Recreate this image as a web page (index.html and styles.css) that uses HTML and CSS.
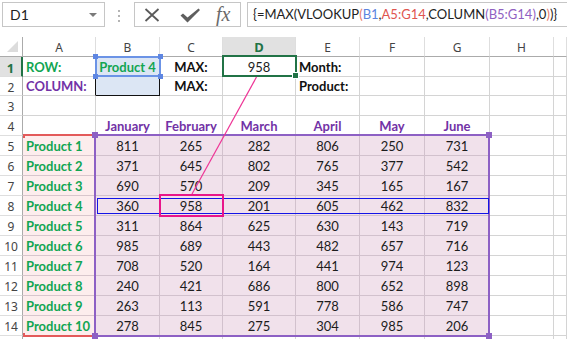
FILE: index.html
```html
<!DOCTYPE html>
<html>
<head>
<meta charset="utf-8">
<link rel="stylesheet" href="styles.css">
</head>
<body>
<div class="fbar">
  <div class="namebox"><span>D1</span><span class="dd"></span></div>
  <div class="dots"><i></i><i></i><i></i></div>
  <div class="fxbox">
    <svg class="ico-x" width="16" height="14" viewBox="0 0 16 14"><path d="M1.5 1 L14.5 13 M14.5 1 L1.5 13" stroke="#5a5a5a" stroke-width="1.8" fill="none"/></svg>
    <svg class="ico-ok" width="21" height="15" viewBox="0 0 21 15"><path d="M0.5 7.5 L3 5.5 L7.5 9.5 L18.5 0.5 L20 2 L7.5 14.5 Z" fill="#5e5e5e"/></svg>
    <span class="fx">fx</span>
  </div>
  <div class="formula">{=MAX(VLOOKUP<span class="p1">(</span><span class="rb">B1</span>,<span class="rr">A5:G14</span>,COLUMN<span class="rp">(</span><span class="rp">B5:G14</span><span class="rp">)</span>,0<span class="p1">)</span>)}</div>
</div>

<div class="sheet">
  <div class="corner"><span class="tri"></span></div>
  <div class="ch">A</div><div class="ch">B</div><div class="ch">C</div><div class="ch ch-sel">D</div><div class="ch">E</div><div class="ch">F</div><div class="ch">G</div><div class="ch">H</div><div class="ch"></div>

  <div class="rh rh-sel">1</div>
  <div class="c lab green">ROW:</div>
  <div class="c ctr lab green sel-fill">Product 4</div>
  <div class="c ctr lab">MAX:</div>
  <div class="c ctr">958</div>
  <div class="c lab">Month:</div>
  <div class="c"></div><div class="c"></div><div class="c"></div><div class="c"></div>

  <div class="rh">2</div>
  <div class="c lab purple bk-r">COLUMN:</div>
  <div class="c sel-fill bk-r bk-b"></div>
  <div class="c ctr lab">MAX:</div>
  <div class="c"></div>
  <div class="c lab">Product:</div>
  <div class="c"></div><div class="c"></div><div class="c"></div><div class="c"></div>

  <div class="rh">3</div>
  <div class="c"></div><div class="c"></div><div class="c"></div><div class="c"></div><div class="c"></div><div class="c"></div><div class="c"></div><div class="c"></div><div class="c"></div>

  <div class="rh">4</div>
  <div class="c"></div>
  <div class="c ctr lab purple">January</div>
  <div class="c ctr lab purple">February</div>
  <div class="c ctr lab purple">March</div>
  <div class="c ctr lab purple">April</div>
  <div class="c ctr lab purple">May</div>
  <div class="c ctr lab purple">June</div>
  <div class="c"></div><div class="c"></div>

  <div class="rh">5</div><div class="c pa lab green">Product 1</div><div class="c pb ctr">811</div><div class="c pb ctr">265</div><div class="c pb ctr">282</div><div class="c pb ctr">806</div><div class="c pb ctr">250</div><div class="c pb ctr">731</div><div class="c"></div><div class="c"></div>
  <div class="rh">6</div><div class="c pa lab green">Product 2</div><div class="c pb ctr">371</div><div class="c pb ctr">645</div><div class="c pb ctr">802</div><div class="c pb ctr">765</div><div class="c pb ctr">377</div><div class="c pb ctr">542</div><div class="c"></div><div class="c"></div>
  <div class="rh">7</div><div class="c pa lab green">Product 3</div><div class="c pb ctr">690</div><div class="c pb ctr">570</div><div class="c pb ctr">209</div><div class="c pb ctr">345</div><div class="c pb ctr">165</div><div class="c pb ctr">167</div><div class="c"></div><div class="c"></div>
  <div class="rh">8</div><div class="c pa lab green">Product 4</div><div class="c pb ctr">360</div><div class="c pb ctr">958</div><div class="c pb ctr">201</div><div class="c pb ctr">605</div><div class="c pb ctr">462</div><div class="c pb ctr">832</div><div class="c"></div><div class="c"></div>
  <div class="rh">9</div><div class="c pa lab green">Product 5</div><div class="c pb ctr">311</div><div class="c pb ctr">864</div><div class="c pb ctr">625</div><div class="c pb ctr">630</div><div class="c pb ctr">143</div><div class="c pb ctr">719</div><div class="c"></div><div class="c"></div>
  <div class="rh">10</div><div class="c pa lab green">Product 6</div><div class="c pb ctr">985</div><div class="c pb ctr">689</div><div class="c pb ctr">443</div><div class="c pb ctr">482</div><div class="c pb ctr">657</div><div class="c pb ctr">716</div><div class="c"></div><div class="c"></div>
  <div class="rh">11</div><div class="c pa lab green">Product 7</div><div class="c pb ctr">708</div><div class="c pb ctr">520</div><div class="c pb ctr">164</div><div class="c pb ctr">441</div><div class="c pb ctr">974</div><div class="c pb ctr">123</div><div class="c"></div><div class="c"></div>
  <div class="rh">12</div><div class="c pa lab green">Product 8</div><div class="c pb ctr">240</div><div class="c pb ctr">421</div><div class="c pb ctr">686</div><div class="c pb ctr">800</div><div class="c pb ctr">652</div><div class="c pb ctr">898</div><div class="c"></div><div class="c"></div>
  <div class="rh">13</div><div class="c pa lab green">Product 9</div><div class="c pb ctr">263</div><div class="c pb ctr">113</div><div class="c pb ctr">591</div><div class="c pb ctr">778</div><div class="c pb ctr">586</div><div class="c pb ctr">747</div><div class="c"></div><div class="c"></div>
  <div class="rh">14</div><div class="c pa lab green">Product 10</div><div class="c pb ctr">278</div><div class="c pb ctr">845</div><div class="c pb ctr">275</div><div class="c pb ctr">304</div><div class="c pb ctr">985</div><div class="c pb ctr">206</div><div class="c"></div><div class="c"></div>
  <div class="rh"></div><div class="c"></div><div class="c"></div><div class="c"></div><div class="c"></div><div class="c"></div><div class="c"></div><div class="c"></div><div class="c"></div><div class="c"></div>

  <!-- overlays -->
  <div class="ov ov-b1"><i class="h tl"></i><i class="h tr"></i><i class="h bl"></i><i class="h br"></i></div>
  <div class="ov ov-d1"><i class="fill"></i></div>
  <div class="ov ov-red-top"></div>
  <div class="ov ov-red-bot"></div>
  <div class="ov ov-red-tick1"></div>
  <div class="ov ov-red-tick2"></div>
  <div class="ov ov-pur"><i class="h tl"></i><i class="h tr"></i><i class="h bl"></i><i class="h br"></i></div>
  <div class="ov ov-row8"></div>
  <div class="ov ov-c8"></div>
  <svg class="ov ov-line" width="567" height="302" viewBox="0 0 567 302"><line x1="256.5" y1="40" x2="192" y2="157" stroke="#ee3596" stroke-width="1.2"/></svg>
</div>
</body>
</html>
```
FILE: styles.css
```css
html, body {
  margin: 0;
  padding: 0;
}
body {
  width: 567px;
  height: 339px;
  overflow: hidden;
  background: #ffffff;
  font-family: Lato, "Liberation Sans", sans-serif;
}

/* ---------- formula bar ---------- */
.fbar {
  height: 37px;
  box-sizing: border-box;
  padding: 2px 0 0 2px;
  display: flex;
  align-items: flex-start;
  background: #ffffff;
}
.namebox {
  width: 103px;
  height: 25px;
  box-sizing: border-box;
  border: 1px solid #c6c6c6;
  display: flex;
  align-items: center;
  justify-content: space-between;
  padding: 0 7px 0 7px;
  font-size: 14px;
  color: #222;
}
.dd {
  width: 0;
  height: 0;
  border-left: 4px solid transparent;
  border-right: 4px solid transparent;
  border-top: 4px solid #7a7a7a;
}
.dots {
  width: 2px;
  margin-left: 13px;
  padding-top: 8px;
  display: flex;
  flex-direction: column;
  gap: 3px;
}
.dots i {
  display: block;
  width: 2px;
  height: 2px;
  background: #b4b4b4;
}
.fxbox {
  margin-left: 14px;
  width: 107px;
  height: 25px;
  box-sizing: border-box;
  border: 1px solid #c6c6c6;
  display: flex;
  align-items: center;
  padding-left: 9px;
}
.ico-x { display: block; }
.ico-ok { display: block; margin-left: 20px; margin-top: 1px; }
.fx {
  margin-left: 15px;
  font-family: "Liberation Serif", "DejaVu Serif", serif;
  font-style: italic;
  font-size: 20px;
  line-height: 20px;
  color: #6a6a6a;
  margin-top: -1px;
}
.formula {
  margin-left: 6px;
  flex: 1;
  height: 25px;
  box-sizing: border-box;
  border: 1px solid #c6c6c6;
  border-right: none;
  padding-left: 5px;
  font-size: 13px;
  line-height: 23px;
  color: #222;
  white-space: nowrap;
  overflow: hidden;
}
.rb { color: #5b85e0; }
.rr { color: #e0554f; }
.rp { color: #9061c2; }
.p1 { color: #e87a6a; }

/* ---------- sheet ---------- */
.sheet {
  position: relative;
  display: grid;
  grid-template-columns: 23px 73px 64px 63px 73px 64px 65px 65px 64px 1fr;
  grid-template-rows: 20px 20px 19px 20px 20px repeat(10, 20px) 20px;
  height: 302px;
  overflow: hidden;
}
.corner {
  border-right: 1px solid #ababab;
  border-bottom: 1px solid #ababab;
  box-sizing: border-box;
  position: relative;
}
.tri {
  position: absolute;
  right: 4px;
  bottom: 4px;
  width: 0;
  height: 0;
  border-left: 11px solid transparent;
  border-bottom: 11px solid #dcdcdc;
}
.ch {
  box-sizing: border-box;
  border-right: 1px solid #dedede;
  border-bottom: 1px solid #ababab;
  display: flex;
  align-items: center;
  justify-content: center;
  font-family: "Noto Sans", "Open Sans", sans-serif;
  font-size: 12px;
  color: #444;
  padding-top: 1px;
}
.ch-sel {
  background: #e1e1e1;
  border-bottom: 2px solid #217346;
  color: #217346;
  font-weight: bold;
  font-size: 13px;
}
.rh {
  box-sizing: border-box;
  border-right: 1px solid #ababab;
  border-bottom: 1px solid #dedede;
  display: flex;
  align-items: center;
  justify-content: center;
  font-family: "Noto Sans", "Open Sans", sans-serif;
  font-size: 12px;
  color: #444;
  padding-top: 2px;
}
.rh-sel {
  background: #e1e1e1;
  border-right: 2px solid #217346;
  color: #217346;
  font-weight: bold;
  font-size: 13px;
}
.c {
  box-sizing: border-box;
  border-right: 1px solid #d4d4d4;
  border-bottom: 1px solid #d4d4d4;
  display: flex;
  align-items: flex-end;
  padding: 0 3px 1px 3px;
  font-size: 13px;
  line-height: 16px;
  color: #1c1c1c;
  white-space: nowrap;
  overflow: hidden;
}
.ctr { justify-content: center; padding-left: 0; padding-right: 0; }
.lab { font-weight: bold; color: #111; }
.green { color: #12a552; }
.purple { color: #7232a6; }
.sel-fill { background: #dce6f4; }
.bk-r { border-right-color: #111; }
.bk-b { border-bottom-color: #111; }
.pa {
  background: #fdeded;
  border-right-color: #d8c6cc;
  border-bottom-color: #d8c6cc;
}
.pb {
  background: #f1e1eb;
  border-right-color: #d2c1cd;
  border-bottom-color: #d2c1cd;
}

/* ---------- overlays ---------- */
.ov {
  position: absolute;
  box-sizing: border-box;
  pointer-events: none;
}
.ov .h {
  position: absolute;
  width: 5px;
  height: 5px;
  display: block;
}
.ov-b1 {
  left: 95px;
  top: 19px;
  width: 66px;
  height: 21px;
  border: 2px solid #6b93e6;
}
.ov-b1 .h { background: #5e86e2; }
.ov-b1 .tl { left: -4px; top: -4px; }
.ov-b1 .tr { right: -4px; top: -4px; }
.ov-b1 .bl { left: -4px; bottom: -4px; }
.ov-b1 .br { right: -4px; bottom: -4px; }
.ov-d1 {
  left: 222px;
  top: 18px;
  width: 75px;
  height: 22px;
  border: 2px solid #217346;
}
.ov-d1 .fill {
  position: absolute;
  right: -4px;
  bottom: -4px;
  width: 5px;
  height: 5px;
  background: #217346;
  border: 1px solid #fff;
  display: block;
}
.ov-red-top { left: 23px; top: 97px; width: 72px; height: 2px; background: #e35a5a; }
.ov-red-bot { left: 23px; top: 298px; width: 72px; height: 2px; background: #e35a5a; }
.ov-red-tick1 { left: 23px; top: 97px; width: 2px; height: 4px; background: #e35a5a; }
.ov-red-tick2 { left: 23px; top: 296px; width: 2px; height: 4px; background: #e35a5a; }
.ov-pur {
  left: 94px;
  top: 97px;
  width: 396px;
  height: 203px;
  border: 2px solid #8d60c4;
}
.ov-pur .h { background: #8d60c4; width: 6px; height: 6px; }
.ov-pur .tl { left: -4px; top: -4px; }
.ov-pur .tr { right: -4px; top: -4px; }
.ov-pur .bl { left: -4px; bottom: -4px; }
.ov-pur .br { right: -4px; bottom: -4px; }
.ov-row8 {
  left: 97px;
  top: 161px;
  width: 392px;
  height: 16px;
  border: 1px solid #1414e6;
}
.ov-c8 {
  left: 159px;
  top: 157px;
  width: 65px;
  height: 23px;
  border: 2px solid #e8168a;
}
.ov-line {
  left: 0;
  top: 0;
}
```
